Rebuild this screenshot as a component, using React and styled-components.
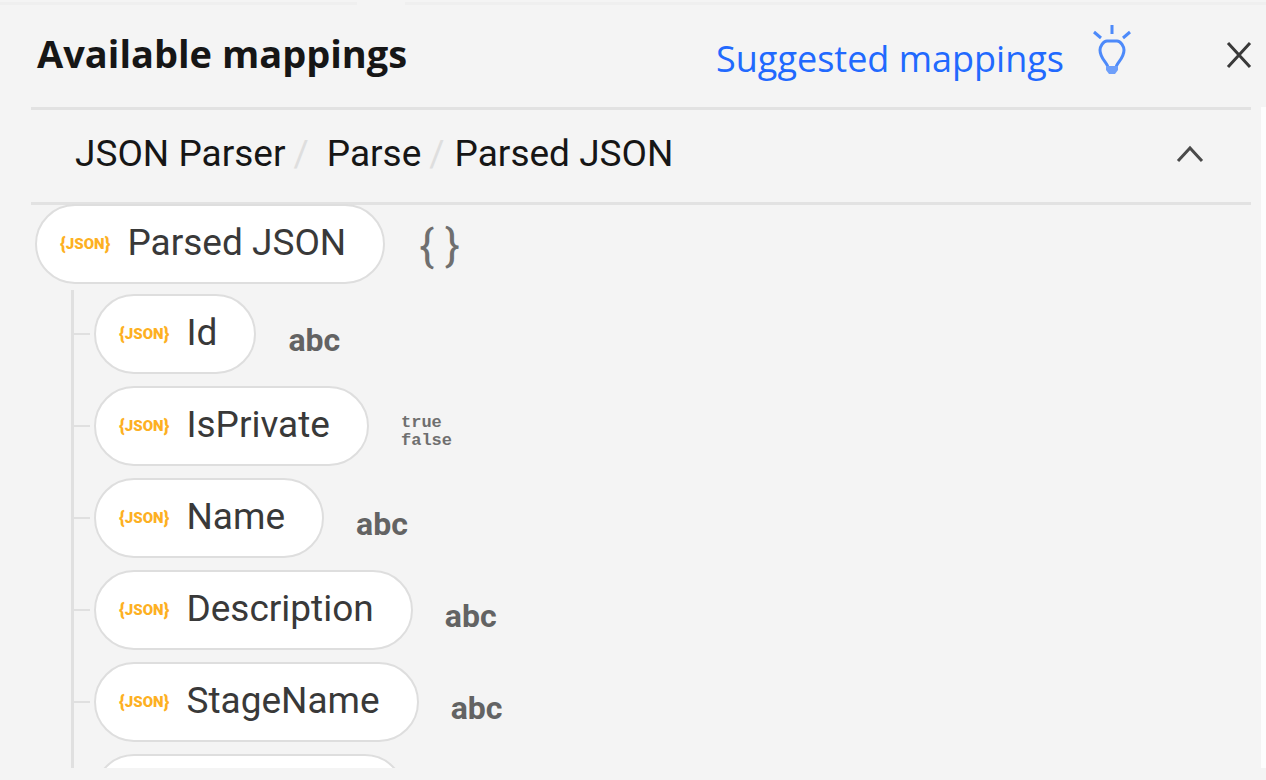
import React from 'react';
import styled, {createGlobalStyle} from "styled-components";

const GlobalStyle = createGlobalStyle`
  * {
    box-sizing: border-box;
  }
  body {
    margin: 0;
    background-color: #f4f4f4;
    font-family: Roboto, "Liberation Sans", sans-serif;
    color: #161616;
  }
  button {
    border: none;
    padding: 0;
    background: none;
    font: inherit;
    color: inherit;
    cursor: pointer;
  }
  svg {
    display: block;
  }
`
const Panel = styled.main`
  display: flex;
  flex-direction: column;
  height: 100vh;
  padding-bottom: 12px;
  overflow: hidden;
`
const TopEdge = styled.div`
  flex: none;
  display: flex;
  justify-content: space-between;
  gap: 48px;
  height: 5px;
  padding-top: 2px;
`
const Edge = styled.span`
  flex: ${props => props.$grow};
  height: 3px;
  background-color: #efefef;
`
const Header = styled.header`
  flex: none;
  display: flex;
  align-items: flex-start;
  height: 102px;
  padding: 20px 14px 0 37px;
`
const Title = styled.h1`
  flex: 1;
  margin: 0;
  font-family: "Open Sans", "Noto Sans", sans-serif;
  font-size: 38px;
  font-weight: 700;
  line-height: 57px;
  white-space: nowrap;
`
const SuggestButton = styled.button`
  display: flex;
  align-items: flex-end;
  gap: 28px;
  height: 50px;
  margin-right: 94px;
  color: #2169fe;
`
const SuggestText = styled.span`
  font-family: "Open Sans", "Noto Sans", sans-serif;
  font-size: 36px;
  line-height: 32px;
  white-space: nowrap;
`
const CloseButton = styled.button`
  height: 60px;
  color: #393939;
`
const Body = styled.div`
  flex: 1;
  display: flex;
  justify-content: space-between;
  min-height: 0;
`
const Content = styled.div`
  flex: 1;
  display: flex;
  flex-direction: column;
  min-width: 0;
  padding-left: 31px;
  margin-right: 10px;
`
const Track = styled.div`
  width: 5px;
  background-color: #fdfdfd;
`
const PathBar = styled.div`
  flex: none;
  display: flex;
  align-items: center;
  justify-content: space-between;
  height: 98px;
  padding: 0 47px 4px 44px;
  border-top: 3px solid #e2e2e2;
  border-bottom: 3px solid #e2e2e2;
`
const Crumbs = styled.ol`
  display: flex;
  margin: 0;
  padding: 0;
  list-style: none;
  font-size: 37px;
  line-height: 44px;
  white-space: nowrap;
`
const Crumb = styled.li`
  display: flex;
  gap: 8px;
  margin-right: ${props => props.$root ? "18px" : "10px"};
`
const Slash = styled.span`
  color: #dedede;
`
const Tree = styled.div`
  flex: 1;
  min-height: 0;
  padding-left: 4px;
  margin-top: -1px;
  overflow: hidden;
`
const Row = styled.div`
  display: flex;
  align-items: center;
  gap: 32px;
`
const Children = styled.ul`
  display: flex;
  flex-direction: column;
  gap: 12px;
  margin: 6px 0 0 36px;
  padding: 4px 0 0;
  border-left: 3px solid #e0e0e0;
  list-style: none;
`
const Item = styled.li`
  display: flex;
  align-items: center;
`
const Tick = styled.span`
  width: 16px;
  height: 2px;
  margin-right: 4px;
  background-color: #e0e0e0;
`
const Pill = styled.button`
  display: flex;
  align-items: center;
  gap: 17px;
  height: 80px;
  padding: 0 37px 0 23px;
  border: 2px solid #dedede;
  border-radius: 40px;
  background-color: white;
  color: #393939;
  font-size: 37px;
  line-height: 44px;
  white-space: nowrap;
`
const PillText = styled.span`
  padding-bottom: 2px;
`
const NextPill = styled.div`
  width: 311px;
  height: 80px;
  margin-left: 20px;
  border: 2px solid #dedede;
  border-radius: 40px;
  background-color: white;
`
const JsonMark = styled.span`
  display: flex;
  align-items: center;
  color: #fdb022;
  font-size: 15px;
  font-weight: 900;
  line-height: 20px;
`
const Brace = styled.span`
  font-size: 18px;
`
const ObjectType = styled.span`
  padding: 4px 0 0 2px;
  color: #6f6f6f;
  font-size: 44px;
  line-height: 52px;
  white-space: pre;
`
const TextType = styled.span`
  padding-top: 12px;
  color: #636363;
  font-size: 32px;
  font-weight: 700;
  line-height: 36px;
`
const BoolType = styled.span`
  padding-top: 12px;
  color: #6f6f6f;
  font-family: "Liberation Mono", monospace;
  font-size: 17px;
  font-weight: 700;
  line-height: 18px;
`

const fields = [
    {name: "Id", type: "string"},
    {name: "IsPrivate", type: "boolean"},
    {name: "Name", type: "string"},
    {name: "Description", type: "string"},
    {name: "StageName", type: "string"},
]

const Bulb = () => (
    <svg width="40" height="50" viewBox="0 0 40 50" fill="none" stroke="#4d8afa" strokeWidth="3" aria-hidden="true">
        <path d="M20 0v9M2 7l7 6M38 7l-7 6"/>
        <path d="M16 43c0-5-8-9-8-18 0-3 3-9 7-9h10c4 0 7 6 7 9 0 9-8 13-8 18"/>
        <path d="M14 41h12v4l-3 4h-6l-3-4z" fill="#6e9ffa" stroke="none"/>
    </svg>
)

const Field = ({name}) => (
    <Pill type="button">
        <JsonMark aria-hidden="true"><Brace>{"{"}</Brace>JSON<Brace>{"}"}</Brace></JsonMark>
        <PillText>{name}</PillText>
    </Pill>
)

const App = () => {
    return (
        <Panel>
            <GlobalStyle/>
            <TopEdge>
                <Edge $grow={357}/>
                <Edge $grow={861}/>
            </TopEdge>
            <Header>
                <Title>Available mappings</Title>
                <SuggestButton type="button">
                    <SuggestText>Suggested mappings</SuggestText>
                    <Bulb/>
                </SuggestButton>
                <CloseButton type="button" aria-label="Close">
                    <svg width="26" height="28" viewBox="0 0 26 28" fill="none" stroke="currentColor" strokeWidth="3">
                        <path d="M2 2l22 24M24 2L2 26"/>
                    </svg>
                </CloseButton>
            </Header>
            <Body>
                <Content>
                    <PathBar>
                        <Crumbs>
                            <Crumb $root>JSON Parser<Slash>/</Slash></Crumb>
                            <Crumb>Parse<Slash>/</Slash></Crumb>
                            <Crumb>Parsed JSON</Crumb>
                        </Crumbs>
                        <button type="button" aria-label="Collapse">
                            <svg width="28" height="18" viewBox="0 0 28 18" fill="none" stroke="#4a4a4a" strokeWidth="3">
                                <path d="M2 16L14 3l12 13"/>
                            </svg>
                        </button>
                    </PathBar>
                    <Tree>
                        <Row>
                            <Field name="Parsed JSON"/>
                            <ObjectType>{"{ }"}</ObjectType>
                        </Row>
                        <Children>
                            {fields.map(field => (
                                <Item key={field.name}>
                                    <Tick/>
                                    <Row>
                                        <Field name={field.name}/>
                                        {field.type === "boolean"
                                            ? <BoolType>true<br/>false</BoolType>
                                            : <TextType>abc</TextType>}
                                    </Row>
                                </Item>
                            ))}
                            <Item>
                                <NextPill/>
                            </Item>
                        </Children>
                    </Tree>
                </Content>
                <Track/>
            </Body>
        </Panel>
    )
}
export default App
